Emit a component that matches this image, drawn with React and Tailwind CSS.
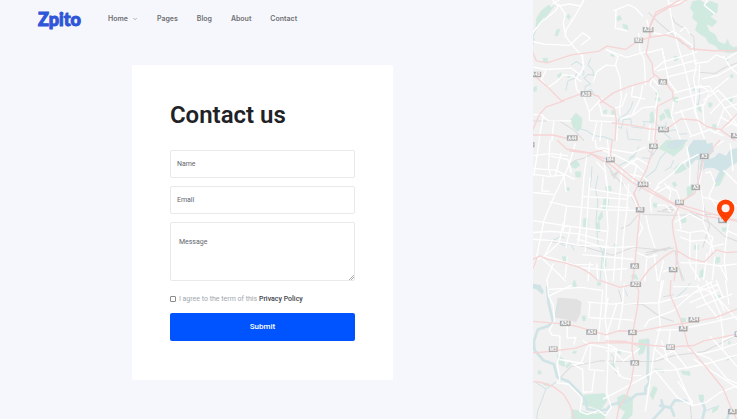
import React from "react";
import { ChevronDown } from "lucide-react";

// Map artwork is split into three bands, each 420 units tall.
const bands = [
  {
    green: [
      "M487 5l20-5 20 12 14-8 22 8-3 25-20 12 20 16-14 14-18-8 8 22 18 10 10 22 20 8 8-15 6 16 12 8 15-2v14l-30 4-28-8-12-14-20-8-8-16-18-10-14-12 8-22-16-14 4-14-10-16z",
      "M122 358l16-20 18 16-2 26-10 14-14-12z",
      "M20 55l14-22 12-10 12-8 6 8-12 18-14 14-12 16-8 10z",
      "M260 52l10-6 5 12-12 5z", "M278 72l14 4 2 12-12-2z", "M76 108l4-18 10-4-6 20z", "M110 48l6-6 6 8-6 8z",
      "M244 160l12 2-4 8-10-4z", "M40 174h14l-2 12-12-2z", "M432 168l12 2-2 10-10 2z", "M82 226l10-8 4 10-8 8z",
      "M428 290l16 2-2 14-12-4z", "M360 340l8-6 4 28-12 6z", "M388 348l12-10 6 14-14 10z", "M402 330l14-4 8 28-10-2z",
      "M500 310l10 8 4 18-10-6z", "M536 306l10 4-4 12-8-4z", "M376 278l8-6 2 10-6 4z", "M220 332l10-4v10l-8 2z", "M245 330h10v12h-10z",
      "M486 258l8 6 2 10-10-6z", "M584 172l10 2-2 10-8-4z", "M596 296l12-8-2 14-8 6z", "M548 372l10 2-2 16-10-6z", "M12 262l8-4v14l-8 2z", "M9 110l5 10-5 16z", "M112 226l8-4 2 8-8 2z", "M602 222l8 4-4 8-6-4z", "M376 292l14 2v8l-14-2z",
    ],
    fill: [],
    water: [
      "M9 112l12-28 18-20 20-30 14-18", "M124 194l16-10 20 14 2 24-18 8", "M182 176l-8 18 14 16 4 16-16-4-14 12 20 18-16 6-2 18 20-8 10 18 10 2",
      "M108 270l6-28 20-8 6-14", "M258 378l16 6 6-26 22-2 4 24 32 4 6-16", "M308 304l-4 16-14 20-22 16-10 22", "M338 364l36 2 12 12 20 0 10 14 20-4 12 14 22-2",
      "M146 384l26 8 20 14 32 4 26 10", "M408 366l-4 34 18 16", "M508 240v50l-6 30", "M290 386l4 30 40 4",
    ],
    white: [
      "M68 0l18 18 32-6 34 6 10-18", "M162 0l-28 50-26 40-2 18 22 28 28 32 6 34-16 24", "M9 98l26-32 42-34 8-14", "M9 124l34 8 76 4 18-18 22-20 22 16-26 20",
      "M88 0l-18 10M108 108l-8-38 6-28-20-30", "M9 200l36 8 80-4 28 22", "M48 212l-14 26 20 24 28-20 18-18 28 2 26 18", "M158 164l2 42-24 34 4 28 22 22 16 45 0 26 72 4",
      "M258 28l-2 56 34 8M252 32l44-18 20 10 22 24", "M230 148l34 22-8 24 14 38 4 62-6 26 2 22", "M190 245l10-30 28-20 32 2", "M178 334l38-40", "M230 150l60 22 52-16 18 0", "M326 100l4 55 12 20 4 78",
      "M350 60l10 35 40 10 30-12", "M414 0l8 42 10 50 12 48 22 72 14 60 16 60 20 68", "M432 95l52 40 14 62-8 40 8 40-4 60", "M360 156l36-10 8 36-32 26", "M396 146l20 98 26 34", "M404 184l96-28M382 212l118-32M412 230l88-22M430 278l84-22M438 300l98-28",
      "M494 190l40-6 24-20 30 12 33-20", "M530 0l-8 16 30 24M516 236l46-10 59-32", "M508 196l-2 58 36 22 52-42", "M580 168l20 34 21 18", "M496 264l40-6 45 62 40 55", "M536 280l-18 40 4 60M520 300l44-30 57 60M540 340l38-40 43-14M562 376l20-52 39-14",
      "M368 222l-8 32 24 24-8 46", "M366 234l20 22 24-12", "M310 254l-6 34 40 8M338 256l-8 40-22 44", "M290 280l-14 38-28 8M384 318l-46 4-28 22-38 12", "M430 304l-6 40 26 72M452 330l30 74M492 330l30 84M432 340l90-28", "M206 302l10 44 44 2M200 368l-12 52M215 368l-5 52M262 368l-2 52M360 374l-4 46M378 340l-8 80M9 344l24-2 22 20 68 0M40 346l-12 70M72 362l-6 58",
      "M420 10l46-4M450 94l14-12 14 18M570 350l51 28M552 398l50-28 19-30M478 410l60-22 40 18",
    ],
    rail: ["M356 38l28 28 44 38 28 26 36 14", "M425 50l10 18 34 22 22 20 2 42", "M506 216l48 4 30-18 37-14", "M9 362l30 0 50 0 44 28 28 30"],
    pink: [
      "M9 156l10 26 32 6 74-24 80-10 26-16 56 10 36-26 38-10 46-8 42 14 30 28 70 6 72-1", "M470 0l-24 14-30 8-40 24-18 38 0 22-6 34-4 20 18 30 4 38-14 14-56 16-50 20-40 30",
      "M448 0l-28 16-42 20-18 38 2 38", "M372 222l34 26 22 28 0 18-46 24-8 102", "M9 222l44 38 42 42 72-26 38 12 10 14 38 24 6 34-4 60", "M9 388l20-46 20-22 54-18", "M246 368l66 8 46 10 54 4M412 384l40-28 50 4 30 20 40 8 28-26 21-22M570 388l44 32", "M9 404l60 0 48 12",
    ],
    labels: [["A28", 354, 89], ["M2", 326, 121], ["A40", 18, 223], ["A6", 398, 245], ["A28", 168, 281], ["A40", 400, 388], ["A44", 127, 413], ["A3", 615, 406]],
  },
  {
    green: [
      "M386 24l22-24 58 0-8 24-28 24-14-10z", "M124 66l16-6 10 14-14 10-10-4z", "M136 94h16v16h-14z", "M222 172l14-2v14l-4 26-14-2z", "M204 232l12-20 2 18-12 14z", "M198 248l10-2 2 28-12-4z", "M160 236l14-4v26l-14 2z",
      "M226 140l16-4 2 14-12 4z", "M470 142l12-10 12 6-6 22-16 10z", "M432 84l22-18 16 18-16 10-18 6z", "M556 120l16-28 14 4-18 38-14 4z", "M452 236l14-6 2 14-12 4z", "M492 314h12v12h-12z", "M98 348l14 2v12h-12z", "M220 322l8-4v60l-8 6z", "M576 262h12v10h-12z",
      "M370 188l12 2-4 12-8-4z", "M556 350h12v16l-14 2z", "M426 128l8-4 6 10-8 6z", "M108 142h10v8h-10z", "M304 404l12-4 8 16-16-2z", "M510 392l8-8 2 24-12 2z", "M252 310h8v10h-8z", "M454 0h8v8l-8 4z", "M66 296h10v8h-10z",
    ],
    fill: [
      "M476 20l14-20 36 0 4 12 16-4 4 24-12 12-4 14 18-6 14-14 22 10 12-20 21-4v42l-18 8-24 20-14 30-12 2 16-34-18-10-24 0-12 10-6-6 4-26-16-4-22 26-8-8 14-28-8-16z",
      "M414 8l22-8 36 0-18 14-22 12-20-6z",
    ],
    water: [
      "M406 36l-16 18-14 34-28 22-20 40", "M186 78l-2 36-4 24", "M204 106l-8 40 8 34-6 60 6 70 14 24-8 86", "M68 302l22-14 14 4M70 298l34 18 18-8 10 20", "M266 76l24-12 22-16 14-30M298 52l16-8", "M336 52l24 2 24-34", "M354 30l16 12", "M430 60l-8 20-18 10",
    ],
    white: [
      "M9 46l50-6 54 6M28 0l-6 44-10 60M60 0l-4 84 6 22M94 38l-18 68M9 84l70 6 54 26M64 48l50 10 10 38", "M136 10l-12 42-14 40-34 68-34 80-20 100-13 50", "M9 102l48 6 44-4 8 50M40 112l-4 40 22 0M9 156l60 6", "M170 50l-8 58-8 104-8 88", "M180 112l-6 80-8 140", "M200 65l26 28 4 40", "M222 64l12 90-4 50 4 60-12 110 8 46", "M276 84l-8 90-10 140-8 106", "M296 132l-6 76-10 84-8 128",
      "M110 196l120 12 92 2M60 184l50 12-10 74M9 240l88 14 58 8 74 10M9 276l54-4 84 8 74 20M9 296l60 4 76 14 92 4", "M100 246l-12 60-44 40M68 298l-24 48-20 10M122 258l-14 64M150 270l-6 38", "M182 146l120 20M160 168l132 8M212 196l84 6M142 296l84 26 88-4M158 342l152 14M150 380l74 8 66-4", "M196 0l2 22 60 24 58 28M232 0l6 52M210 22l96 16 40-18", "M278 84l44-30 34 20M290 100l50 10 20 20M320 76l-12 44",
      "M282 132l30 44 16 40M324 234l14 28-16 30M348 226l8 40 18 54", "M390 128l38-30 26-30 50-26", "M404 130l18 22-6 32 28 30 8 50M414 140l26 12 14 40M388 126l-28 50 4 38", "M470 20l10 56-2 60", "M520 64l-12 60 12 74-2 44 24 60 8 30", "M526 98l14-4 14 34-18 38 22 32 18 34M518 170l52 14 20-8", "M594 250l-8 60-4 50 8 60", "M435 244l44-24 34 18M440 268l36 8 42-6 30 20-12 60M480 276l-2 92 30 52M452 290l30 12 44-4 20 20 34-8", "M452 366l70 2 42 8 57-6M500 310l-4 106M530 340l-10 76M554 350l-8 66",
      "M40 356l46 44 20 20M50 348l80 24 60 0M70 370l-20 50M112 350l-6 60M180 366l-6 54M200 370l4 50M320 336l34 14 26-6M350 354l-6 66M372 340l10 80M400 360l-14 60", "M304 60l36 34M360 160l28-22M384 154l34-18M382 194l24 0 16 20M550 20l30-18M580 90l41 40M600 10l8 80M600 180l21 18M590 270l31 14M400 394l40-18M570 376l20 40",
    ],
    rail: ["M116 78l20-18 30-8 20-12 40 28 40 52 24 22 36 66 16 14 80 2 120-2", "M240 92l14 22 8-20-16 12 22-10", "M382 212l40 4 8-10-34 4 32-12", "M60 302l100 16 88 26 60-24 100 10", "M340 346l80-26-72 16 82-14", "M438 316l0 42 24 62M434 330l12 50 10 40", "M508 44l-6 70 22 96 14 46-20 64", "M480 216l60 32 44 40 37 14", "M324 222l-24 30-26 12"],
    pink: [
      "M82 0l28 26 62 10 78 28 60 50 52 34 64 38 98 28 97 26", "M180 40l60 32 66 54 64 34 68 36 84 30 99 16", "M120 32l58 6 38-8", "M240 60l6-60M380 0l-12 26-18 60-38 72 18 50-8 80-8 90-8 42", "M330 208l-20-50", "M568 0l-46 54-14 54-14 50-42 26-26 60 4 38 12 52-10 86", "M9 356l22-10 22 10 50 10 46 14 36 22 20 18", "M430 330l-28 18-46 40-24 32M440 330l40 24 42 10 36-36 30 8 33-2", "M9 386l12-34",
    ],
    labels: [["A44", -2, 13], ["A6", 370, 18], ["A3", 522, 48], ["M4", 241, 58], ["A44", 339, 132], ["A3", 497, 141], ["M4", 448, 186], ["A6", 330, 208], ["M4", 577, 240], ["A6", 314, 376], ["A3", 429, 387]],
  },
  {
    green: [
      "M326 178l26-4-4 20-8 22-14 6z", "M82 222l20 14 2 22-16-8z", "M164 342l60-4 6 22-18 26-30-10-24-4z", "M126 386l30 4 38 10 36-6-8 22-98 0z", "M262 350l20-10 26 12-2 50-20 18-12-6 12-22-22-14z", "M360 342l10-26 12 6-14 34z", "M128 10l6-12 6 18-8 6z", "M156 106h10v14h-8z", "M264 206l8 4v10l-10-4z", "M452 270l26 2 2 12-22-4z", "M454 112l12 0v12l-14 0z",
      "M506 342l14 0v16h-12z", "M548 384l18-12-4 14-16 10z", "M108 254l10-10 6 6-14 12z", "M374 264l26 4v6l-22-4z", "M558 42l14 4-4 8-10-4z", "M204 4h8v10h-10z", "M132 210l8 2-4 6-8-2z", "M24 272l6-4 6 10-10 2z", "M596 180l6 6-8 4z", "M42 306l14 2-2 6-12-2z", "M240 248l12 2 2 10-12-4z",
    ],
    fill: ["M9 10l22 4 10 18-4 8-16-14-12-4z"],
    water: [],
    river: ["M52 20l4 46 14 60-16 10-30 10-12 36 2 26 26 30 32 12 10 38 34 14 30 30 22 28 4 24 30 6 28-4 12-14 30-8 20-2 28-22 26-2 0-18 12-16-6-24 2-60 0-42", "M366 418l34-36-6-24M390 374l30 6 14-22 34 2M424 384l8 20M516 418l8-36-10-24M600 384l-10 32"],
    thin: ["M20 306l28 18-12 34-12 30-4 28M48 324l30-20M260 278l-12-22 4-24-8-12M588 238l33-16M278 12l14 34M434 54l30-26 16-20M86 62l-10 40M526 390l28-12"],
    white: [
      "M52 0l4 44 14 30 4 46-16 28 8 14 24 4 0 52-8 32 8 44-8 12 34 4 40 40-6 42 22 8 34-12 20 16 18-24-14-44 6-150-10-66 4-120", "M58 26l98-6 62 10-8 90-4 60", "M56 46l68-32", "M174 64l76 6 30-4M180 66l-4 44 44 4M234 52l-10 60 84 6M282 10l-6 80-12 60", "M280 70l106-4 88-24", "M112 132v40l26-2-6 20", "M160 180l22 16-4 70 44 4M172 198l-18 48-22 6 26 14 2 68 26-2 8-60M90 236l70 12", "M176 190l130 26M230 188l30 16-6 40M228 210l24 0 28 30 48-36M228 240l50 50 26 6M262 260l6 26", "M220 354l54-28 102-56 52-2 98-18 95-28",
      "M344 138l12-20 74-28 36-34 44-34 36-20M394 0l-8 68 4 72-18 70-8 60-18 120", "M400 0l-14 66M430 18l70 0 50 20 36 40 35 40", "M528 0l16 40 26 58 8 60-2 50", "M502 12l22 50 40 52M540 6l42 84M558 0l20 50M586 0l10 70M500 34l64-24M500 80l104-40M480 66l84-38", "M376 206l60 54 50 114M384 196l44 16-50 24M394 180l20 60M430 210l40 52 56-14M376 270l66 80 46 24M488 374l40-10 42-30 51-20", "M474 206l66 28 50 60 31 14M500 222l60-14 61-20M492 236l128 84M540 168l38 40 43 50M578 178l43-18", "M484 374l2-12-42-60M380 148l90-2M420 150l-4 40M478 140l80-18 60-14", "M310 284l22 0M260 70l-34 104",
    ],
    rail: ["M86 296l36-38 90-18 64 2 96 0 60-18 90-12 99-50", "M280 68l60 4 50 36 40 14", "M266 28l12 42", "M430 42l-30 6M484 416l-4-44"],
    gray: ["M84 52l56 4 14 8-4 36-12 24-22-8-40-6z"],
    pink: ["M212 0l58 20 46-10 10 20-4 50-14 76-2 50 6 40-8 56-14 40-24 40-6 34", "M9 122l98 8 38 8 82 24 38-12 60 2 60-12 110-18 62-12 104-42", "M9 216l50-4 78-10 46-16 120 0 64 8 54 4 70-4 30-14 100-20", "M422 0l-2 42 34 80 20 74 56 66 48 60 20 48 23 50", "M9 302l22 2 38 12 32 24 18 30 16 46", "M228 180l58 2 36 12"],
    labels: [["A22", 317, 11], ["A34", 106, 128], ["A34", 185, 154], ["A6", 307, 155], ["A34", 491, 117], ["A3", 459, 144], ["M5", 70, 205], ["M5", 421, 199], ["A6", 314, 246], ["A3", 606, 392], ["M5", 626, 160]],
  },
];

function Lines({ paths = [], color, width }) {
  return paths.map((d) => (
    <path key={d} d={d} fill="none" stroke={color} strokeWidth={width} strokeLinejoin="round" strokeLinecap="round" />
  ));
}

function Areas({ paths = [], color }) {
  return paths.map((d) => <path key={d} d={d} fill={color} stroke={color} strokeWidth="2" strokeLinejoin="round" />);
}

function CityMap() {
  return (
    <svg className="block h-full w-full" viewBox="9 0 612 1257" preserveAspectRatio="xMidYMid slice" role="img" aria-label="Map">
      <rect x="0" y="0" width="640" height="1260" fill="#f1f1f1" />
      {bands.map((b, i) => (
        <g key={i} transform={`translate(0 ${i * 420})`}>
          <Areas paths={b.gray} color="#e1e1e1" />
          <Areas paths={b.green} color="#d0eae0" />
          <Areas paths={b.fill} color="#d0e3e6" />
          <Lines paths={b.water} color="#d0e3e6" width="3" />
          <Lines paths={b.thin} color="#d0e3e6" width="3" />
          <Lines paths={b.river} color="#d0e3e6" width="8" />
          <Lines paths={b.rail} color="#dddcdd" width="3" />
          <Lines paths={b.white} color="#ffffff" width="4" />
          <Lines paths={b.pink} color="#f7d4d5" width="4" />
        </g>
      ))}
      {bands.map((b, i) => (
        <g key={i} transform={`translate(0 ${i * 420})`}>
          {b.labels.map(([name, x, y]) => (
            <g key={`${x}-${y}`}>
              <rect x={x - (name.length > 2 ? 16 : 13)} y={y - 8} width={name.length > 2 ? 32 : 26} height="16" fill="#a9a9a9" />
              <text x={x} y={y + 5} textAnchor="middle" fill="#ffffff" fontSize="14" fontWeight="700" fontFamily="Roboto, sans-serif">
                {name}
              </text>
            </g>
          ))}
        </g>
      ))}
      <path fill="#ff4000" d="M586 666c-9-11-26-27-26-43a26 26 0 0 1 52 0c0 16-17 32-26 43z" />
      <circle cx="586" cy="623" r="12" fill="#f8f5f4" />
    </svg>
  );
}

const field = "block w-full rounded-xs border border-[#e9e9eb] bg-white text-[7px] text-gray-700 placeholder:text-[#5f666e] placeholder:opacity-100 outline-none";

export default function App() {
  return (
    <div className="flex min-h-screen bg-[#f6f7fc] font-[Roboto,sans-serif]">
      <div className="min-w-0 flex-1">
        <header className="flex h-[38px] items-center gap-7 pl-[38px]">
          <a href="#" className="w-[42px] font-[family-name:Lato] text-[18px] leading-5 font-black text-[#2f55d8] [-webkit-text-stroke:1px_#2f55d8]">Zpito</a>
          <nav className="flex items-center gap-[19px] font-[family-name:Inter] text-[7px] leading-3 font-semibold text-[#6f7073]">
            <a href="#" className="flex items-center gap-1">
              Home
              <ChevronDown size={6} strokeWidth={2} />
            </a>
            <a href="#">Pages</a>
            <a href="#">Blog</a>
            <a href="#">About</a>
            <a href="#">Contact</a>
          </nav>
        </header>
        <main className="flex justify-center pt-[27px] pr-2 pb-10">
          <form className="w-full max-w-[261px] rounded-xs bg-white px-[38px] pt-[38px] pb-[39px]" onSubmit={(e) => e.preventDefault()}>
            <h1 className="-mt-1 text-[24px] leading-8 font-semibold text-[#1f2226]">Contact us</h1>
            <div className="mt-[19px] flex flex-col gap-2">
              <input type="text" aria-label="Name" placeholder="Name" className={`${field} h-7 px-1.5`} />
              <input type="email" aria-label="Email" placeholder="Email" className={`${field} h-7 px-1.5`} />
              <div className="relative">
                <textarea aria-label="Message" placeholder="Message" className={`${field} h-[59px] resize-none px-2 pt-[13px] leading-3`} />
                <svg className="absolute right-px bottom-px size-[5px]" viewBox="0 0 5 5" aria-hidden="true">
                  <path d="M0 5L5 0M2 5L5 2" stroke="#9a9a9a" strokeWidth="0.8" />
                </svg>
              </div>
            </div>
            <div className="mt-3 flex items-center gap-[3px] text-[7px] leading-3">
              <input id="agree" type="checkbox" className="size-1.5 appearance-none rounded-[1px] border border-[#8b8b8b] bg-white checked:bg-[#0054ff]" />
              <label htmlFor="agree" className="whitespace-nowrap text-[#a0a6ac]">
                I agree to the term of this <a href="#" className="font-medium text-[#3d4349]">Privacy Policy</a>
              </label>
            </div>
            <button type="submit" className="mt-2 block h-7 w-full rounded-xs bg-[#0054ff] text-[8px] leading-3 font-medium text-white">
              Submit
            </button>
          </form>
        </main>
      </div>
      <aside className="relative w-[27.7%] shrink-0 overflow-hidden">
        <div className="absolute inset-0">
          <CityMap />
        </div>
      </aside>
    </div>
  );
}
